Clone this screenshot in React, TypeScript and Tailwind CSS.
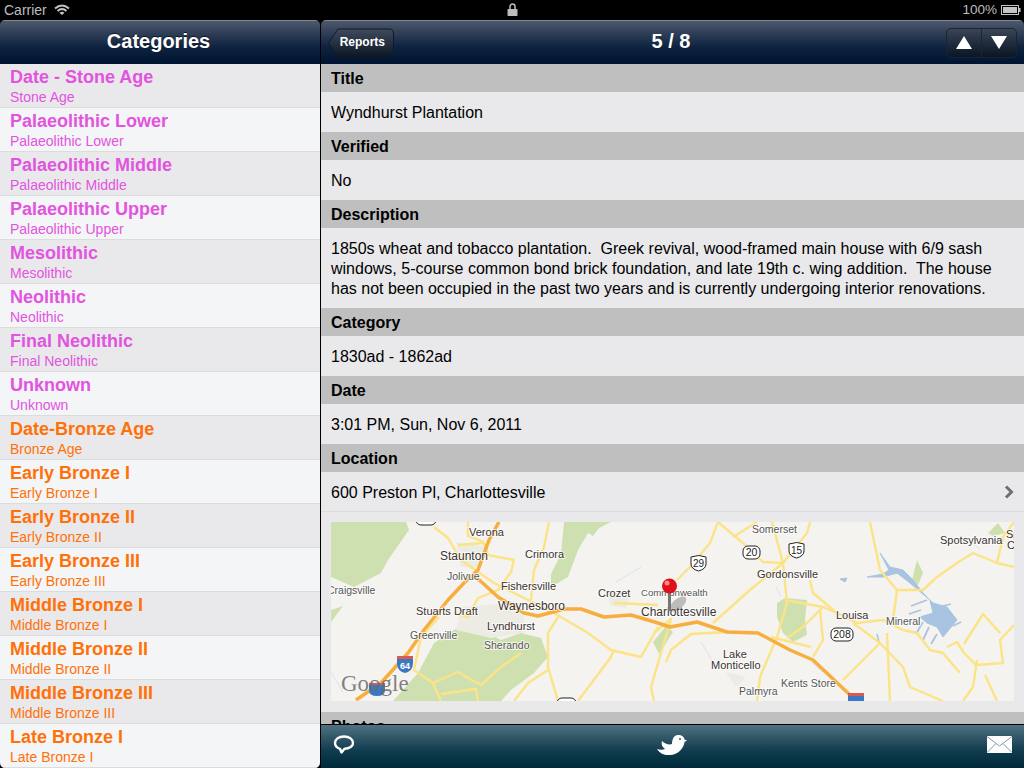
import React from 'react';

const categories = [
  { title: 'Date - Stone Age', sub: 'Stone Age', pink: true },
  { title: 'Palaeolithic Lower', sub: 'Palaeolithic Lower', pink: true },
  { title: 'Palaeolithic Middle', sub: 'Palaeolithic Middle', pink: true },
  { title: 'Palaeolithic Upper', sub: 'Palaeolithic Upper', pink: true },
  { title: 'Mesolithic', sub: 'Mesolithic', pink: true },
  { title: 'Neolithic', sub: 'Neolithic', pink: true },
  { title: 'Final Neolithic', sub: 'Final Neolithic', pink: true },
  { title: 'Unknown', sub: 'Unknown', pink: true },
  { title: 'Date-Bronze Age', sub: 'Bronze Age', pink: false },
  { title: 'Early Bronze I', sub: 'Early Bronze I', pink: false },
  { title: 'Early Bronze II', sub: 'Early Bronze II', pink: false },
  { title: 'Early Bronze III', sub: 'Early Bronze III', pink: false },
  { title: 'Middle Bronze I', sub: 'Middle Bronze I', pink: false },
  { title: 'Middle Bronze II', sub: 'Middle Bronze II', pink: false },
  { title: 'Middle Bronze III', sub: 'Middle Bronze III', pink: false },
  { title: 'Late Bronze I', sub: 'Late Bronze I', pink: false },
];

const yellowRoads = [
  '103,5 117,16 130,38 163,61 197,78 223,91 257,111 280,128 310,135 327,105',
  '127,23 153,21 157,33 183,38 180,50 167,68 147,76 137,95 123,91',
  '137,0 137,14 153,20',
  '218,0 213,25 203,48 200,78',
  '227,95 217,111 217,145 227,179',
  '217,148 197,161 183,179',
  '190,131 170,145 150,163 137,156 127,150 102,161 83,148 90,115 108,95',
  '102,161 110,179',
  '110,172 145,167 147,179',
  '247,179 280,135 283,128',
  '283,81 327,83',
  '323,111 340,97 320,165 323,179',
  '387,0 379,21 359,45 346,58',
  '387,0 412,21 432,40 452,41 476,11 479,0',
  '402,15 426,0',
  '441,0 452,41 456,81 446,115 429,155 426,179',
  '452,41 419,68 382,101',
  '454,78 492,85 506,91 526,101 552,98 572,108 586,111 599,128 612,131 629,151',
  '539,0 549,48 566,68 592,68 606,55 626,41 642,31 666,41 683,45',
  '566,68 562,98',
  '479,58 482,71 506,91',
  '492,85 472,105 456,116',
  '489,88 492,118 482,135',
  '522,101 549,121 512,158',
  '556,111 559,179',
  '549,121 572,145 579,165 612,179',
  '616,125 626,120 633,131 645,143 672,141 669,118 683,103',
  '633,122 652,92 669,111',
  '646,138 642,165 632,179',
  '654,153 666,179',
  '666,41 672,15 683,0',
  '396,110 360,112 340,128 335,140',
  '440,115 480,125',
];

const labels: { x: number; y: number; t: string; s?: number; c?: string }[] = [
  { x: 138, y: 14, t: 'Verona', s: 11 },
  { x: 109, y: 38, t: 'Staunton', s: 12 },
  { x: 194, y: 36, t: 'Crimora', s: 11 },
  { x: 116, y: 58, t: 'Jolivue', s: 10.5, c: '#555' },
  { x: -4, y: 72, t: 'Craigsville', s: 10.5, c: '#555' },
  { x: 170, y: 68, t: 'Fishersville', s: 11 },
  { x: 267, y: 75, t: 'Crozet', s: 11 },
  { x: 310, y: 74, t: 'Commonwealth', s: 9.6, c: '#555' },
  { x: 85, y: 93, t: 'Stuarts Draft', s: 11 },
  { x: 167, y: 88, t: 'Waynesboro', s: 12 },
  { x: 310, y: 94, t: 'Charlottesville', s: 12 },
  { x: 156, y: 108, t: 'Lyndhurst', s: 11 },
  { x: 79, y: 117, t: 'Greenville', s: 10.5, c: '#555' },
  { x: 153, y: 127, t: 'Sherando', s: 10.5, c: '#555' },
  { x: 421, y: 11, t: 'Somerset', s: 10.5, c: '#555' },
  { x: 426, y: 56, t: 'Gordonsville', s: 11 },
  { x: 609, y: 22, t: 'Spotsylvania', s: 11 },
  { x: 505, y: 97, t: 'Louisa', s: 11 },
  { x: 555, y: 103, t: 'Mineral', s: 10.5, c: '#555' },
  { x: 392, y: 136, t: 'Lake', s: 11 },
  { x: 380, y: 147, t: 'Monticello', s: 11 },
  { x: 450, y: 165, t: 'Kents Store', s: 10.5, c: '#555' },
  { x: 408, y: 173, t: 'Palmyra', s: 10.5, c: '#555' },
  { x: 675, y: 16, t: 'Sp', s: 11 },
  { x: 676, y: 27, t: 'C', s: 11 },
];

const ovalShields = [
  { x: 85, y: -10, w: 20, t: '250' },
  { x: 412, y: 24, w: 17, t: '20' },
  { x: 500, y: 106, w: 22, t: '208' },
  { x: 226, y: 176, w: 19, t: '' },
];

const usShields = [
  { x: 360, y: 33, t: '29' },
  { x: 458, y: 20, t: '15' },
];

// static map picture: coordinates are local to the 683x179 frame
function MapPicture() {
  return (
    <svg viewBox="0 0 683 179" className="block h-[179px] w-[683px] bg-[#f4f3f0]" fontFamily="'Liberation Sans', sans-serif">
      <g fill="#cfe0b0">
        <path d="M0 0H75L78 8 57 38 50 51 23 65 0 55Z" />
        <path d="M0 88 12 84 0 100Z" />
        <path d="M130 103 157 111 170 118 190 111 210 116 217 135 203 151 180 168 170 179H62L87 151 103 121 123 108Z" />
        <path d="M233 0H280L268 6 262 14 257 11 247 28 237 55 220 65 220 52 230 32Z" />
        <path d="M446 81 454 76 476 78 474 98 476 113 462 120 452 111 446 95Z" />
        <path d="M586 38 592 51 587 63 581 58Z" />
        <path d="M657 11 667 1 674 11 662 14Z" />
        <path d="M322 120 335 104 342 110 328 132Z" />
      </g>
      <g fill="#ecebe4">
        <path d="M125 20 155 25 150 45 130 45Z" />
        <path d="M130 85 190 80 195 110 160 116 125 108Z" />
        <path d="M275 70 300 72 295 86 280 84Z" />
        <path d="M395 150 415 155 405 165Z" />
      </g>
      <g fill="#a8c4e0" stroke="#a8c4e0" strokeLinejoin="round">
        <path d="M549 31 559 45 572 48 582 58 592 71 602 81 616 85 626 98 612 115 606 105 596 101 589 95 602 91 599 78 579 61 566 51 552 55 536 55 552 52 558 48Z" strokeWidth="1" />
        <path d="M612 84 620 82M622 104 630 100M606 112 600 122M592 100 585 112M598 105 592 118M580 84 596 78M578 92 590 88" fill="none" strokeWidth="1.8" />
        <path d="M509 57 516 56 514 60Z" />
        <path d="M546 112 548 120" fill="none" strokeWidth="1.5" />
      </g>
      <g fill="none" stroke="#cfe0f0" strokeWidth="0.8">
        <path d="M445 65 450 75M370 120 385 145M480 140 492 150M640 20 650 28M0 150 12 170M285 60 310 45" />
      </g>
      <g fill="none" strokeLinejoin="round">
        {yellowRoads.map((p) => (
          <polyline key={p} points={p} stroke="#fbe386" strokeWidth="2.4" />
        ))}
        <polyline points="168,0 158,18 147,48 133,61 117,78 93,108 77,131 50,161 25,178" stroke="#f7ae3e" strokeWidth="3.5" />
        <polyline points="145,55 167,75 193,91 207,94 233,87 250,87 273,95 300,93 327,101 339,105 366,100 396,110 427,111 459,128 482,138 519,173" stroke="#f7ae3e" strokeWidth="3.5" />
      </g>
      {ovalShields.map((s) => (
        <g key={s.x}>
          <rect x={s.x} y={s.y} width={s.w} height="13" rx="5" fill="#fff" stroke="#222" />
          <text x={s.x + s.w / 2} y={s.y + 10} fontSize="10.5" textAnchor="middle" fill="#222">{s.t}</text>
        </g>
      ))}
      {usShields.map((s) => (
        <g key={s.x}>
          <path d={`M${s.x} ${s.y + 2}Q${s.x + 8} ${s.y - 1} ${s.x + 15} ${s.y + 2}V${s.y + 9}Q${s.x + 15} ${s.y + 14} ${s.x + 7.500} ${s.y + 16}Q${s.x} ${s.y + 14} ${s.x} ${s.y + 9}Z`} fill="#fff" stroke="#222" />
          <text x={s.x + 7.5} y={s.y + 11.5} fontSize="10" textAnchor="middle" fill="#222">{s.t}</text>
        </g>
      ))}
      {labels.map((l) => (
        <text key={l.t} x={l.x} y={l.y} fontSize={l.s} fill={l.c || '#3a3230'} stroke="#fff" strokeOpacity="0.7" strokeWidth="2" paintOrder="stroke">{l.t}</text>
      ))}
      {/* interstate markers */}
      <path d="M66 134H82V141Q82 149 74 151 66 149 66 141Z" fill="#3b78c4" />
      <rect x="66" y="134" width="16" height="3" fill="#d85a50" />
      <text x="74" y="147" fontSize="9" fontWeight="700" textAnchor="middle" fill="#fff">64</text>
      <path d="M38 161H54V168Q54 174 46 174 38 174 38 168Z" fill="#3b78c4" />
      <rect x="38" y="161" width="16" height="2" fill="#d85a50" />
      <path d="M517 171H533V179H517Z" fill="#3b78c4" />
      <rect x="517" y="171" width="16" height="3" fill="#d85a50" />
      <text x="10" y="169" fontFamily="'Liberation Serif', serif" fontSize="23" fill="#6b6b6b" fillOpacity="0.85">Google</text>
      {/* pin */}
      <ellipse cx="347" cy="82" rx="10" ry="5" fill="#555" fillOpacity="0.35" transform="rotate(-40 347 82)" />
      <rect x="337" y="70" width="3" height="19" fill="#777" />
      <circle cx="338.5" cy="64" r="7.500" fill="#e0101a" />
      <circle cx="336" cy="61" r="2.500" fill="#ff8a8a" />
    </svg>
  );
}

function DetailHeader({ children }: { children: React.ReactNode }) {
  return <div className="h-7 shrink-0 bg-[#bfbfbf] px-2.5 text-base leading-[30px] font-bold text-black">{children}</div>;
}

function DetailValue({ children }: { children: React.ReactNode }) {
  return <div className="h-10 shrink-0 bg-[#e9e9eb] px-2.5 text-base leading-[42px] text-black">{children}</div>;
}

export default function App() {
  return (
    <div className="flex h-[768px] w-[1024px] flex-col overflow-hidden bg-black font-['Liberation_Sans',Arial,sans-serif]">
      {/* status bar */}
      <div className="relative flex h-5 shrink-0 items-center justify-between pr-[3px] pb-px pl-1 text-sm text-[#bdbdbd]">
        <div className="flex items-center gap-[7px]">
          <span>Carrier</span>
          <svg width="16" height="12" viewBox="0 0 16 12" fill="none" stroke="#c4c4c4" strokeWidth="2">
            <path d="M1 4.500Q8 -1.500 15 4.500" />
            <path d="M3.500 7Q8 3 12.500 7" />
            <path d="M8 11 5.500 8.700Q8 6.600 10.500 8.700Z" fill="#c4c4c4" stroke="none" />
          </svg>
        </div>
        <svg className="absolute top-[3px] left-[507px]" width="11" height="13" viewBox="0 0 11 13">
          <path d="M3 6.500V3.500a2.500 2.500 0 0 1 5 0V6.500" fill="none" stroke="#bdbdbd" strokeWidth="1.500" />
          <rect x="0.500" y="6" width="10" height="7" rx="0.800" fill="#bdbdbd" />
        </svg>
        <div className="flex items-center gap-[4px]">
          <span className="text-[13.5px]">100%</span>
          <svg width="20" height="10" viewBox="0 0 20 10">
            <rect x="0.500" y="0.500" width="17" height="9" fill="none" stroke="#c4c4c4" />
            <rect x="2" y="2" width="14" height="6" fill="#c4c4c4" />
            <rect x="18" y="3" width="1.500" height="4" fill="#c4c4c4" />
          </svg>
        </div>
      </div>

      <div className="flex min-h-0 flex-1 gap-px">
        {/* categories */}
        <div className="flex w-80 shrink-0 flex-col overflow-hidden rounded-t-[5px] rounded-b-[5px]">
          <div className="flex h-11 shrink-0 items-center justify-center border-t border-[#7d8798] bg-gradient-to-b from-[#4d586b] via-[#0f2340] via-60% to-[#001430] pr-[3px] pb-1 text-xl font-bold text-white [text-shadow:0_-1px_0_rgba(0,0,0,0.6)]">
            Categories
          </div>
          {categories.map((c, i) => (
            <div
              key={c.title}
              className={`h-11 shrink-0 border-b border-[#dcdcde] pl-2.5 ${i % 2 === 0 ? 'bg-[#e9e9eb]' : 'bg-[#f4f5f7]'} ${c.pink ? 'text-[#e254e0]' : 'text-[#ff7108]'}`}
            >
              <div className="pt-[2px] text-lg leading-[22px] font-bold">{c.title}</div>
              <div className="text-sm leading-[18px]">{c.sub}</div>
            </div>
          ))}
        </div>

        {/* report detail */}
        <div className="relative flex min-w-0 flex-1 flex-col overflow-hidden rounded-t-[5px]">
          <div className="relative flex h-11 shrink-0 items-center justify-between border-t border-[#7d8798] bg-gradient-to-b from-[#4d586b] via-[#0f2340] via-60% to-[#001430] pr-[7px] pl-[7px]">
            <button className="relative flex h-[30px] w-[66px] items-center justify-end pr-[9px] pb-[2px] text-xs font-bold text-white">
              <svg className="absolute top-0 left-0" width="66" height="30" viewBox="0 0 66 30">
                <defs>
                  <linearGradient id="backBtn" x1="0" y1="0" x2="0" y2="1">
                    <stop offset="0" stopColor="#3f4a5c" />
                    <stop offset="1" stopColor="#0a1526" />
                  </linearGradient>
                </defs>
                <path d="M0.500 15 10 1H61Q65.500 1 65.500 5V25Q65.500 29.500 61 29.500H10Z" fill="url(#backBtn)" stroke="#111a28" />
              </svg>
              <span className="relative">Reports</span>
            </button>
            <div className="absolute top-0 left-0 flex h-full w-full items-center justify-center pr-[3px] pb-1 text-xl font-bold text-white">5 / 8</div>
            <div className="relative flex h-[30px] w-[71px] overflow-hidden rounded-[5px] border border-[#1a2433] bg-gradient-to-b from-[#3a4556] to-[#0a1526]">
              <div className="flex flex-1 items-center justify-center border-r border-[#1c2636]">
                <svg width="16" height="13" viewBox="0 0 16 13"><path d="M8 0 16 13H0Z" fill="#fff" /></svg>
              </div>
              <div className="flex flex-1 items-center justify-center">
                <svg width="16" height="13" viewBox="0 0 16 13"><path d="M0 0H16L8 13Z" fill="#fff" /></svg>
              </div>
            </div>
          </div>

          <div className="flex min-h-0 flex-1 flex-col overflow-hidden bg-[#e9e9eb]">
            <DetailHeader>Title</DetailHeader>
            <DetailValue>Wyndhurst Plantation</DetailValue>
            <DetailHeader>Verified</DetailHeader>
            <DetailValue>No</DetailValue>
            <DetailHeader>Description</DetailHeader>
            <div className="h-20 shrink-0 px-2.5 pt-[11px] text-base leading-5 whitespace-pre text-black">
              {'1850s wheat and tobacco plantation.  Greek revival, wood-framed main house with 6/9 sash\nwindows, 5-course common bond brick foundation, and late 19th c. wing addition.  The house\nhas not been occupied in the past two years and is currently undergoing interior renovations.'}
            </div>
            <DetailHeader>Category</DetailHeader>
            <DetailValue>1830ad - 1862ad</DetailValue>
            <DetailHeader>Date</DetailHeader>
            <DetailValue>3:01 PM, Sun, Nov 6, 2011</DetailValue>
            <DetailHeader>Location</DetailHeader>
            <div className="flex h-10 shrink-0 items-center justify-between border-b border-[#dcdcde] pr-[10px] pl-2.5 text-base text-black">
              <span className="pt-[2px]">600 Preston Pl, Charlottesville</span>
              <svg width="10" height="14" viewBox="0 0 10 14" fill="none" stroke="#6f6f72" strokeWidth="3"><path d="M2 1.500 7.500 7 2 12.500" /></svg>
            </div>
            <div className="shrink-0 px-2.5 pt-[10px] pb-[11px]">
              <MapPicture />
            </div>
            <DetailHeader>Photos</DetailHeader>
          </div>

          {/* toolbar */}
          <div className="absolute right-0 bottom-0 left-0 flex h-11 items-center justify-between border-t border-black bg-gradient-to-b from-[#4f7280] via-[#0f3c4e] via-60% to-[#002a3b] pr-[12px] pb-[4px] pl-[12px]">
            <svg width="22" height="22" viewBox="0 0 22 22" fill="none" stroke="#fff" strokeWidth="2.400">
              <path d="M11 2.500C5.500 2.500 2 5.400 2 9c0 2.900 2.300 5 5 5.800L8.500 18.500l3-3.700c5 0 8.500-2.600 8.500-5.800 0-3.600-3.500-6.500-9-6.500Z" strokeLinejoin="round" />
            </svg>
            <svg className="absolute top-[9px] left-[336px]" width="30" height="22" viewBox="0 0 30 22" fill="#fff">
              <path d="M21 1C25 1 27 3 27.500 5.500L30 6.500 27.500 8C27 14 21 21 13 21 8 21.500 3 20 0 15 3 16 6 16 8 15 5 13 4 10 5 7 8 10 12 11 15 10 15 5 17 1 21 1Z" />
              <circle cx="23" cy="5" r="0.900" fill="#1b4a5c" />
            </svg>
            <svg width="25" height="17" viewBox="0 0 25 17">
              <rect width="25" height="17" fill="#fff" />
              <path d="M0 .5 12.500 10 25 .5M0 16.500 9 7.500M25 16.500 16 7.500" fill="none" stroke="#7f9aa5" strokeWidth="1" />
            </svg>
          </div>
        </div>
      </div>
    </div>
  );
}
